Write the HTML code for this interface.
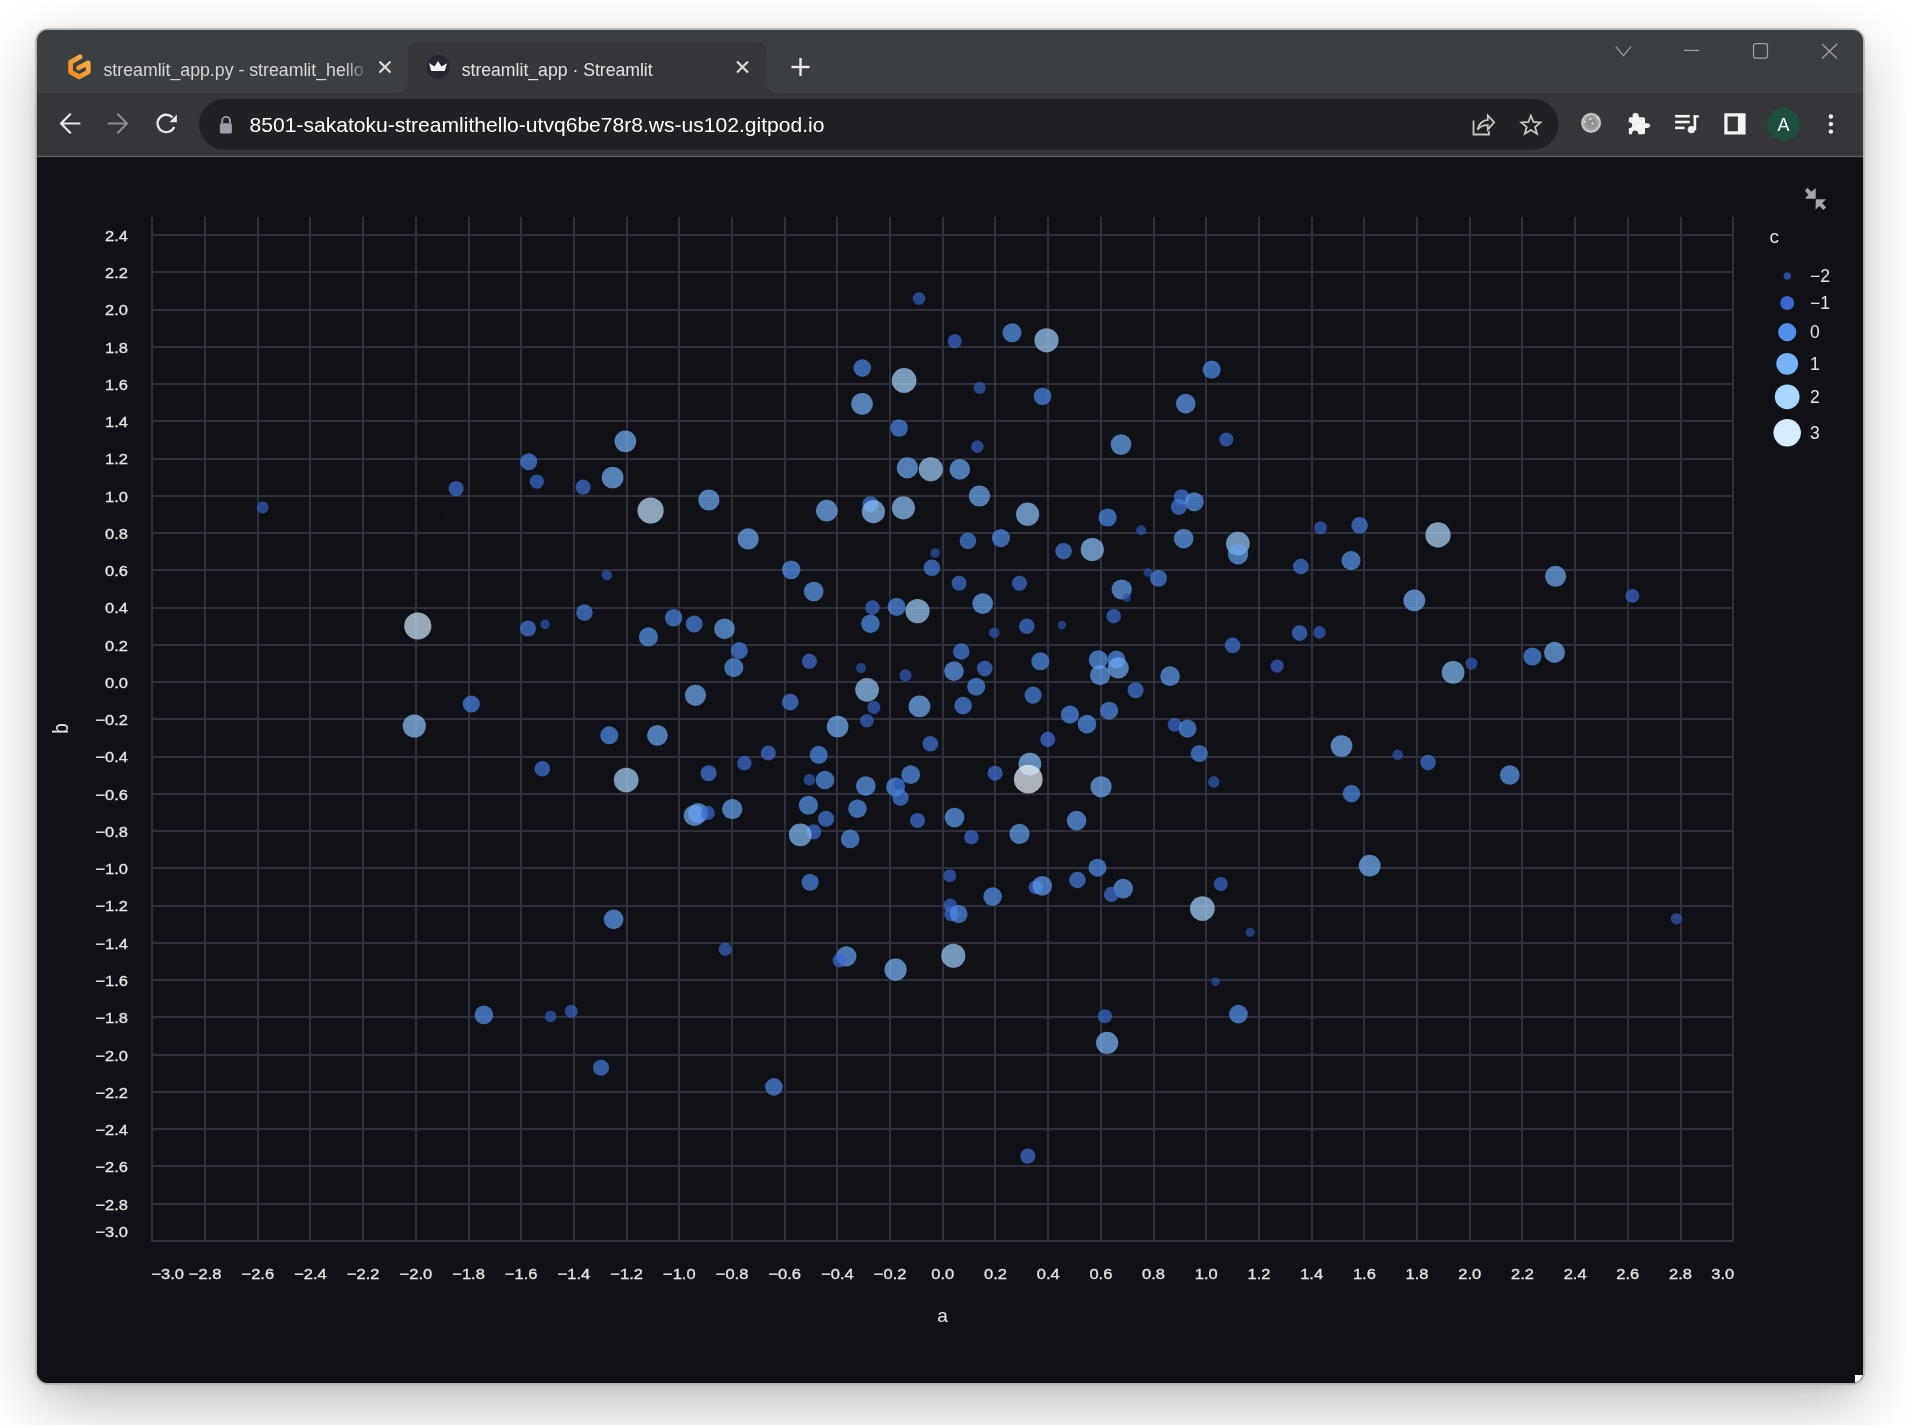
<!DOCTYPE html>
<html><head><meta charset="utf-8"><style>
html,body{margin:0;padding:0;width:1905px;height:1425px;overflow:hidden;background:#ffffff;}
#win{position:absolute;left:37px;top:30px;width:1826px;height:1353px;border-radius:11px;background:#0f1116;
 box-shadow: 0 22px 60px rgba(0,0,0,0.26), 0 2px 12px rgba(0,0,0,0.10);overflow:hidden;}
svg{position:absolute;left:0;top:0;will-change:transform;}
</style></head><body>
<div id="win"></div>
<svg width="1905" height="1425" viewBox="0 0 1905 1425">
<defs>
 <linearGradient id="gp" x1="0" y1="1" x2="1" y2="0"><stop offset="0" stop-color="#f08a17"/><stop offset="1" stop-color="#f7b44e"/></linearGradient>
 <linearGradient id="fadeg" gradientUnits="userSpaceOnUse" x1="345" y1="0" x2="366" y2="0"><stop offset="0" stop-color="#d5d6d8"/><stop offset="1" stop-color="#d5d6d8" stop-opacity="0.15"/></linearGradient>
 <radialGradient id="globe" cx="0.5" cy="0.5" r="0.5"><stop offset="0" stop-color="#8a8a8a"/><stop offset="0.65" stop-color="#9a9a9a"/><stop offset="0.88" stop-color="#cdcdcd"/><stop offset="1" stop-color="#a8a8a8"/></radialGradient>
 <clipPath id="wclip"><rect x="37" y="30" width="1826" height="1353" rx="11"/></clipPath>
</defs>
<rect x="36.1" y="29.1" width="1827.8" height="1354.8" rx="11.9" fill="none" stroke="#b3b3b3" stroke-width="1.8"/>
<g clip-path="url(#wclip)">
 <rect x="37" y="30" width="1826" height="63" fill="#3c3f42"/>
 <!-- active tab -->
 <path d="M396 93 Q408 93 408 81 L408 54 Q408 42 420 42 L755 42 Q767 42 767 54 L767 81 Q767 93 779 93 Z" fill="#35363a"/>
 <rect x="37" y="93" width="1826" height="63" fill="#35363a"/>
 <rect x="37" y="155.8" width="1826" height="1.6" fill="#5c5e62"/>
 <rect x="37" y="157.4" width="1826" height="1226" fill="#0f1116"/>
</g>
<!-- tab 1 -->
<path d="M80.1 56.9 L70.6 62.2 L70.6 72.2 L79.2 76.9 L88.2 72 L88.2 62.8 L78.6 67.9" fill="none" stroke="url(#gp)" stroke-width="4.8" stroke-linecap="round" stroke-linejoin="round"/>
<text x="103.5" y="75.5" fill="url(#fadeg)" font-size="18.5" font-family='"Liberation Sans", sans-serif' textLength="260" lengthAdjust="spacingAndGlyphs">streamlit_app.py - streamlit_hello</text>
<rect x="340" y="50" width="30" height="36" fill="#3c3f42" opacity="0.0"/>
<g stroke="#dcdcdc" stroke-width="2.2" stroke-linecap="butt"><line x1="379.5" y1="61.5" x2="390.5" y2="72.5"/><line x1="390.5" y1="61.5" x2="379.5" y2="72.5"/></g>
<!-- tab 2 -->
<circle cx="438.2" cy="66.8" r="11.8" fill="#262730"/>
<path d="M429 63 L434.5 66.5 L438 61 L441.5 66.5 L447 63.2 L444.8 71 L431.2 71 Z" fill="#f4f4f4"/>
<text x="461.7" y="75.5" fill="#e1e2e4" font-size="18.5" font-family='"Liberation Sans", sans-serif' textLength="191" lengthAdjust="spacingAndGlyphs">streamlit_app · Streamlit</text>
<g stroke="#dcdcdc" stroke-width="2.2"><line x1="737" y1="61.5" x2="748" y2="72.5"/><line x1="748" y1="61.5" x2="737" y2="72.5"/></g>
<!-- new tab plus -->
<g stroke="#e8eaed" stroke-width="2.4"><line x1="800.5" y1="58" x2="800.5" y2="76"/><line x1="791.5" y1="67" x2="809.5" y2="67"/></g>
<!-- window controls -->
<g stroke="#a0a1a3" stroke-width="1.2" fill="none">
 <path d="M1615.8 46.6 L1623.4 55.6 L1631 46.6"/>
 <line x1="1684" y1="50.4" x2="1699" y2="50.4"/>
 <rect x="1753.5" y="43.6" width="14" height="14.6" rx="2.2"/>
 <line x1="1822" y1="44" x2="1837" y2="58.5"/><line x1="1837" y1="44" x2="1822" y2="58.5"/>
</g>
<!-- nav -->
<g stroke="#e8eaed" stroke-width="2.2" fill="none" stroke-linecap="round" stroke-linejoin="round">
 <path d="M79.5 123.5 L61 123.5 M70.2 114.3 L61 123.5 L70.2 132.7"/>
</g>
<g stroke="#8b8c8f" stroke-width="2.2" fill="none" stroke-linecap="round" stroke-linejoin="round">
 <path d="M108.6 123.5 L127 123.5 M117.9 114.3 L127 123.5 L117.9 132.7"/>
</g>
<g fill="none" stroke="#e8eaed" stroke-width="2.3">
 <path d="M174.2 127 A8.7 8.7 0 1 1 172.5 117.4"/>
</g>
<path d="M169.5 122.3 L176.8 122.3 L176.8 114.6 Z" fill="#e8eaed"/>
<!-- omnibox -->
<rect x="199" y="99" width="1359.5" height="50.6" rx="25.3" fill="#202124"/>
<path d="M222.2 123 L222.2 120.8 A3.9 3.9 0 0 1 230 120.8 L230 123" fill="none" stroke="#9aa0a6" stroke-width="1.9"/>
<rect x="219.9" y="123.2" width="12" height="10.2" rx="1.3" fill="#9aa0a6"/>
<text x="249.5" y="131.5" fill="#ffffff" font-size="20.6" font-family='"Liberation Sans", sans-serif' textLength="575" lengthAdjust="spacingAndGlyphs">8501-sakatoku-streamlithello-utvq6be78r8.ws-us102.gitpod.io</text>
<!-- share -->
<g fill="none" stroke="#c7c7c7" stroke-width="1.8">
 <path d="M1473.5 120.5 L1473.5 134.5 L1489 134.5 L1489 131"/>
 <path d="M1477.6 129.6 Q1479.5 120.6 1487.8 119.8 L1487.8 115.5 L1494.2 122.3 L1487.8 129.6 L1487.8 125.2 Q1481.2 125.0 1477.6 129.6 Z"/>
</g>
<path transform="translate(1530.9,125.5) scale(0.95) translate(-1530.9,-125.5)" d="M1530.9 115.2 L1533.5 121.8 L1541 122.4 L1535.3 127.1 L1537.3 134.2 L1530.9 130.2 L1524.5 134.2 L1526.5 127.1 L1520.8 122.4 L1528.3 121.8 Z" fill="none" stroke="#c7c7c7" stroke-width="1.9" stroke-linejoin="miter"/>
<!-- extensions -->
<circle cx="1591.1" cy="122.8" r="10.1" fill="url(#globe)"/>
<g fill="#e8e8e8"><circle cx="1590.4" cy="119" r="1.1"/><circle cx="1584.5" cy="121.8" r="1.1"/><circle cx="1592.6" cy="123.4" r="1.1"/><circle cx="1597.8" cy="117.7" r="1"/></g>
<path d="M1635.5 113 Q1638.5 112.6 1638.8 116 L1638.8 117.3 L1643.4 117.3 Q1645 117.3 1645 119 L1645 123 Q1650.2 123 1650.2 125.4 Q1650.2 128 1645 128 L1645 132.8 Q1645 134.2 1643.5 134.2 L1638.2 134.2 Q1638.2 130.6 1635 130.6 Q1632 130.6 1632 134.2 L1630 134.2 Q1628.8 134.2 1628.8 133 L1628.8 128.2 Q1632.2 128.2 1632.2 125.2 Q1632.2 122.2 1628.8 122.2 L1628.8 118.8 Q1628.8 117.3 1630.4 117.3 L1632.5 117.3 L1632.5 116 Q1632.6 112.8 1635.5 113 Z" fill="#f1f3f4"/>
<g fill="#f1f3f4">
 <rect x="1675.1" y="114.9" width="14.7" height="2.6"/>
 <rect x="1675.1" y="120.7" width="14.7" height="2.6"/>
 <rect x="1675.1" y="126.6" width="9.5" height="2.6"/>
 <rect x="1693.6" y="115.2" width="2.6" height="15"/>
 <rect x="1693.6" y="115.2" width="5.3" height="2.3"/>
 <circle cx="1691.4" cy="129.6" r="3.7"/>
</g>
<path d="M1724.3 113.2 H1745.6 V134.5 H1724.3 Z M1727.6 116.5 V131.2 H1737.9 V116.5 Z" fill="#f1f3f4" fill-rule="evenodd"/>
<circle cx="1783.5" cy="124.3" r="16.4" fill="#1d4f41"/>
<text x="1783.6" y="131.3" text-anchor="middle" fill="#ffffff" font-size="18" font-family='"Liberation Sans", sans-serif'>A</text>
<g fill="#f1f3f4"><circle cx="1830.9" cy="116.5" r="2.2"/><circle cx="1830.9" cy="124.1" r="2.2"/><circle cx="1830.9" cy="131.6" r="2.2"/></g>
<!-- chart -->
<g fill="#2e2f3a" shape-rendering="crispEdges"><rect x="151" y="217" width="2" height="1025" /><rect x="204" y="217" width="2" height="1025" /><rect x="257" y="217" width="2" height="1025" /><rect x="309" y="217" width="2" height="1025" /><rect x="362" y="217" width="2" height="1025" /><rect x="415" y="217" width="2" height="1025" /><rect x="468" y="217" width="2" height="1025" /><rect x="520" y="217" width="2" height="1025" /><rect x="573" y="217" width="2" height="1025" /><rect x="626" y="217" width="2" height="1025" /><rect x="678" y="217" width="2" height="1025" /><rect x="731" y="217" width="2" height="1025" /><rect x="784" y="217" width="2" height="1025" /><rect x="836" y="217" width="2" height="1025" /><rect x="889" y="217" width="2" height="1025" /><rect x="942" y="217" width="2" height="1025" /><rect x="994" y="217" width="2" height="1025" /><rect x="1047" y="217" width="2" height="1025" /><rect x="1100" y="217" width="2" height="1025" /><rect x="1153" y="217" width="2" height="1025" /><rect x="1205" y="217" width="2" height="1025" /><rect x="1258" y="217" width="2" height="1025" /><rect x="1311" y="217" width="2" height="1025" /><rect x="1363" y="217" width="2" height="1025" /><rect x="1416" y="217" width="2" height="1025" /><rect x="1469" y="217" width="2" height="1025" /><rect x="1521" y="217" width="2" height="1025" /><rect x="1574" y="217" width="2" height="1025" /><rect x="1627" y="217" width="2" height="1025" /><rect x="1680" y="217" width="2" height="1025" /><rect x="1732" y="217" width="2" height="1025" /><rect x="151" y="1240" width="1583" height="2" /><rect x="151" y="1203" width="1583" height="2" /><rect x="151" y="1165" width="1583" height="2" /><rect x="151" y="1128" width="1583" height="2" /><rect x="151" y="1091" width="1583" height="2" /><rect x="151" y="1054" width="1583" height="2" /><rect x="151" y="1016" width="1583" height="2" /><rect x="151" y="979" width="1583" height="2" /><rect x="151" y="942" width="1583" height="2" /><rect x="151" y="905" width="1583" height="2" /><rect x="151" y="867" width="1583" height="2" /><rect x="151" y="830" width="1583" height="2" /><rect x="151" y="793" width="1583" height="2" /><rect x="151" y="756" width="1583" height="2" /><rect x="151" y="718" width="1583" height="2" /><rect x="151" y="681" width="1583" height="2" /><rect x="151" y="644" width="1583" height="2" /><rect x="151" y="607" width="1583" height="2" /><rect x="151" y="569" width="1583" height="2" /><rect x="151" y="532" width="1583" height="2" /><rect x="151" y="495" width="1583" height="2" /><rect x="151" y="458" width="1583" height="2" /><rect x="151" y="420" width="1583" height="2" /><rect x="151" y="383" width="1583" height="2" /><rect x="151" y="346" width="1583" height="2" /><rect x="151" y="309" width="1583" height="2" /><rect x="151" y="271" width="1583" height="2" /><rect x="151" y="234" width="1583" height="2" /></g>
<g fill="#e6e6e6" stroke="#e6e6e6" stroke-width="0.3" font-family='"Liberation Sans", sans-serif' font-size="15"><text transform="translate(128,1237.00) scale(1.1,1)" text-anchor="end">−3.0</text><text transform="translate(128,1209.54) scale(1.1,1)" text-anchor="end">−2.8</text><text transform="translate(128,1172.28) scale(1.1,1)" text-anchor="end">−2.6</text><text transform="translate(128,1135.02) scale(1.1,1)" text-anchor="end">−2.4</text><text transform="translate(128,1097.76) scale(1.1,1)" text-anchor="end">−2.2</text><text transform="translate(128,1060.50) scale(1.1,1)" text-anchor="end">−2.0</text><text transform="translate(128,1023.24) scale(1.1,1)" text-anchor="end">−1.8</text><text transform="translate(128,985.98) scale(1.1,1)" text-anchor="end">−1.6</text><text transform="translate(128,948.72) scale(1.1,1)" text-anchor="end">−1.4</text><text transform="translate(128,911.46) scale(1.1,1)" text-anchor="end">−1.2</text><text transform="translate(128,874.20) scale(1.1,1)" text-anchor="end">−1.0</text><text transform="translate(128,836.94) scale(1.1,1)" text-anchor="end">−0.8</text><text transform="translate(128,799.68) scale(1.1,1)" text-anchor="end">−0.6</text><text transform="translate(128,762.42) scale(1.1,1)" text-anchor="end">−0.4</text><text transform="translate(128,725.16) scale(1.1,1)" text-anchor="end">−0.2</text><text transform="translate(128,687.90) scale(1.1,1)" text-anchor="end">0.0</text><text transform="translate(128,650.64) scale(1.1,1)" text-anchor="end">0.2</text><text transform="translate(128,613.38) scale(1.1,1)" text-anchor="end">0.4</text><text transform="translate(128,576.12) scale(1.1,1)" text-anchor="end">0.6</text><text transform="translate(128,538.86) scale(1.1,1)" text-anchor="end">0.8</text><text transform="translate(128,501.60) scale(1.1,1)" text-anchor="end">1.0</text><text transform="translate(128,464.34) scale(1.1,1)" text-anchor="end">1.2</text><text transform="translate(128,427.08) scale(1.1,1)" text-anchor="end">1.4</text><text transform="translate(128,389.82) scale(1.1,1)" text-anchor="end">1.6</text><text transform="translate(128,352.56) scale(1.1,1)" text-anchor="end">1.8</text><text transform="translate(128,315.30) scale(1.1,1)" text-anchor="end">2.0</text><text transform="translate(128,278.04) scale(1.1,1)" text-anchor="end">2.2</text><text transform="translate(128,240.78) scale(1.1,1)" text-anchor="end">2.4</text><text transform="translate(151.40,1278.5) scale(1.1,1)" text-anchor="start">−3.0</text><text transform="translate(205.09,1278.5) scale(1.1,1)" text-anchor="middle">−2.8</text><text transform="translate(257.79,1278.5) scale(1.1,1)" text-anchor="middle">−2.6</text><text transform="translate(310.48,1278.5) scale(1.1,1)" text-anchor="middle">−2.4</text><text transform="translate(363.17,1278.5) scale(1.1,1)" text-anchor="middle">−2.2</text><text transform="translate(415.87,1278.5) scale(1.1,1)" text-anchor="middle">−2.0</text><text transform="translate(468.56,1278.5) scale(1.1,1)" text-anchor="middle">−1.8</text><text transform="translate(521.25,1278.5) scale(1.1,1)" text-anchor="middle">−1.6</text><text transform="translate(573.95,1278.5) scale(1.1,1)" text-anchor="middle">−1.4</text><text transform="translate(626.64,1278.5) scale(1.1,1)" text-anchor="middle">−1.2</text><text transform="translate(679.33,1278.5) scale(1.1,1)" text-anchor="middle">−1.0</text><text transform="translate(732.03,1278.5) scale(1.1,1)" text-anchor="middle">−0.8</text><text transform="translate(784.72,1278.5) scale(1.1,1)" text-anchor="middle">−0.6</text><text transform="translate(837.41,1278.5) scale(1.1,1)" text-anchor="middle">−0.4</text><text transform="translate(890.11,1278.5) scale(1.1,1)" text-anchor="middle">−0.2</text><text transform="translate(942.80,1278.5) scale(1.1,1)" text-anchor="middle">0.0</text><text transform="translate(995.49,1278.5) scale(1.1,1)" text-anchor="middle">0.2</text><text transform="translate(1048.19,1278.5) scale(1.1,1)" text-anchor="middle">0.4</text><text transform="translate(1100.88,1278.5) scale(1.1,1)" text-anchor="middle">0.6</text><text transform="translate(1153.57,1278.5) scale(1.1,1)" text-anchor="middle">0.8</text><text transform="translate(1206.27,1278.5) scale(1.1,1)" text-anchor="middle">1.0</text><text transform="translate(1258.96,1278.5) scale(1.1,1)" text-anchor="middle">1.2</text><text transform="translate(1311.65,1278.5) scale(1.1,1)" text-anchor="middle">1.4</text><text transform="translate(1364.35,1278.5) scale(1.1,1)" text-anchor="middle">1.6</text><text transform="translate(1417.04,1278.5) scale(1.1,1)" text-anchor="middle">1.8</text><text transform="translate(1469.73,1278.5) scale(1.1,1)" text-anchor="middle">2.0</text><text transform="translate(1522.43,1278.5) scale(1.1,1)" text-anchor="middle">2.2</text><text transform="translate(1575.12,1278.5) scale(1.1,1)" text-anchor="middle">2.4</text><text transform="translate(1627.81,1278.5) scale(1.1,1)" text-anchor="middle">2.6</text><text transform="translate(1680.51,1278.5) scale(1.1,1)" text-anchor="middle">2.8</text><text transform="translate(1734.20,1278.5) scale(1.1,1)" text-anchor="end">3.0</text></g>
<text x="942.5" y="1322" text-anchor="middle" fill="#e6e6e6" font-size="19" font-family='"Liberation Sans", sans-serif'>a</text><text transform="translate(68.3,728.5) rotate(-90) scale(1,1.18)" text-anchor="middle" fill="#e6e6e6" font-size="19" font-family='"Liberation Sans", sans-serif'>b</text>
<g fill-opacity="0.7"><circle cx="262.6" cy="507.5" r="5.90" fill="#335cbb"/><circle cx="456.1" cy="488.6" r="7.55" fill="#4071d6"/><circle cx="447.8" cy="517.6" r="0.75" fill="#20438a"/><circle cx="528.7" cy="461.7" r="8.55" fill="#4a84e4"/><circle cx="536.8" cy="481.6" r="7.20" fill="#3c6ad2"/><circle cx="583.1" cy="487.1" r="7.55" fill="#4071d6"/><circle cx="612.6" cy="477.5" r="10.85" fill="#76b2fb"/><circle cx="606.8" cy="575.0" r="5.30" fill="#2f57b2"/><circle cx="584.4" cy="612.6" r="8.30" fill="#477fe0"/><circle cx="528.0" cy="628.5" r="8.05" fill="#447add"/><circle cx="545.1" cy="624.4" r="4.80" fill="#2c53aa"/><circle cx="417.8" cy="626.0" r="13.60" fill="#d2eaff"/><circle cx="471.3" cy="704.0" r="8.55" fill="#4a84e4"/><circle cx="414.3" cy="726.0" r="11.60" fill="#8ec4fd"/><circle cx="609.3" cy="735.3" r="9.05" fill="#4f8eeb"/><circle cx="542.3" cy="768.7" r="7.80" fill="#4275d9"/><circle cx="613.6" cy="919.4" r="9.85" fill="#5f9ef2"/><circle cx="483.9" cy="1014.9" r="9.30" fill="#5493ed"/><circle cx="550.6" cy="1016.4" r="5.80" fill="#325bba"/><circle cx="571.3" cy="1011.4" r="6.55" fill="#3762c7"/><circle cx="601.0" cy="1067.8" r="8.05" fill="#447add"/><circle cx="919.0" cy="298.5" r="6.30" fill="#3560c3"/><circle cx="954.8" cy="341.1" r="7.05" fill="#3b68d0"/><circle cx="1012.0" cy="332.7" r="9.55" fill="#5998ef"/><circle cx="1046.5" cy="340.3" r="12.10" fill="#9fd0fe"/><circle cx="862.3" cy="368.0" r="8.80" fill="#4c89e7"/><circle cx="904.1" cy="380.4" r="12.35" fill="#a8d6ff"/><circle cx="979.7" cy="387.9" r="6.05" fill="#345dbe"/><circle cx="1042.5" cy="396.2" r="8.80" fill="#4c89e7"/><circle cx="862.0" cy="403.8" r="10.85" fill="#76b2fb"/><circle cx="899.1" cy="428.0" r="8.80" fill="#4c89e7"/><circle cx="977.4" cy="446.6" r="6.30" fill="#3560c3"/><circle cx="625.4" cy="441.3" r="10.85" fill="#76b2fb"/><circle cx="650.6" cy="510.6" r="13.10" fill="#c1e2ff"/><circle cx="708.9" cy="500.0" r="10.60" fill="#70adf8"/><circle cx="748.2" cy="538.9" r="10.60" fill="#70adf8"/><circle cx="791.2" cy="569.8" r="9.30" fill="#5493ed"/><circle cx="826.8" cy="510.6" r="10.85" fill="#76b2fb"/><circle cx="870.4" cy="504.3" r="8.05" fill="#447add"/><circle cx="873.4" cy="511.6" r="11.60" fill="#8ec4fd"/><circle cx="907.4" cy="467.8" r="10.60" fill="#70adf8"/><circle cx="930.8" cy="469.3" r="12.10" fill="#9fd0fe"/><circle cx="959.8" cy="469.3" r="10.35" fill="#6ba8f6"/><circle cx="979.5" cy="496.0" r="10.60" fill="#70adf8"/><circle cx="903.4" cy="507.9" r="11.60" fill="#8ec4fd"/><circle cx="1027.6" cy="514.2" r="11.60" fill="#8ec4fd"/><circle cx="967.9" cy="540.9" r="8.30" fill="#477fe0"/><circle cx="1000.9" cy="538.1" r="9.05" fill="#4f8eeb"/><circle cx="935.1" cy="553.0" r="4.80" fill="#2c53aa"/><circle cx="931.8" cy="567.8" r="8.30" fill="#477fe0"/><circle cx="1063.6" cy="551.2" r="8.30" fill="#477fe0"/><circle cx="813.7" cy="591.5" r="9.85" fill="#5f9ef2"/><circle cx="959.1" cy="583.2" r="7.55" fill="#4071d6"/><circle cx="1019.5" cy="583.2" r="7.55" fill="#4071d6"/><circle cx="872.4" cy="607.6" r="7.30" fill="#3d6cd3"/><circle cx="896.6" cy="606.9" r="9.05" fill="#4f8eeb"/><circle cx="917.5" cy="611.1" r="12.10" fill="#9fd0fe"/><circle cx="982.7" cy="603.6" r="10.35" fill="#6ba8f6"/><circle cx="870.4" cy="623.7" r="9.30" fill="#5493ed"/><circle cx="994.3" cy="632.8" r="5.30" fill="#2f57b2"/><circle cx="1026.8" cy="626.3" r="7.80" fill="#4275d9"/><circle cx="1061.9" cy="625.0" r="4.30" fill="#2a50a4"/><circle cx="673.6" cy="617.7" r="8.80" fill="#4c89e7"/><circle cx="694.2" cy="624.0" r="8.55" fill="#4a84e4"/><circle cx="724.5" cy="628.8" r="10.35" fill="#6ba8f6"/><circle cx="648.4" cy="636.9" r="9.55" fill="#5998ef"/><circle cx="739.3" cy="650.5" r="8.55" fill="#4a84e4"/><circle cx="733.8" cy="667.6" r="9.55" fill="#5998ef"/><circle cx="809.4" cy="661.3" r="7.55" fill="#4071d6"/><circle cx="861.0" cy="668.1" r="5.05" fill="#2e55ae"/><circle cx="905.6" cy="675.4" r="6.05" fill="#345dbe"/><circle cx="961.3" cy="651.5" r="8.30" fill="#477fe0"/><circle cx="954.0" cy="671.1" r="9.85" fill="#5f9ef2"/><circle cx="984.8" cy="668.6" r="7.80" fill="#4275d9"/><circle cx="1040.4" cy="661.3" r="9.05" fill="#4f8eeb"/><circle cx="867.1" cy="689.8" r="11.85" fill="#97cafe"/><circle cx="976.2" cy="686.7" r="9.05" fill="#4f8eeb"/><circle cx="1033.1" cy="695.1" r="8.55" fill="#4a84e4"/><circle cx="695.5" cy="695.3" r="10.60" fill="#70adf8"/><circle cx="790.2" cy="702.1" r="8.30" fill="#477fe0"/><circle cx="873.9" cy="707.4" r="6.55" fill="#3762c7"/><circle cx="919.5" cy="706.4" r="10.85" fill="#76b2fb"/><circle cx="963.1" cy="705.6" r="8.80" fill="#4c89e7"/><circle cx="1069.9" cy="714.5" r="9.05" fill="#4f8eeb"/><circle cx="866.8" cy="720.8" r="6.80" fill="#3965cc"/><circle cx="837.6" cy="726.5" r="10.85" fill="#76b2fb"/><circle cx="657.4" cy="735.4" r="10.35" fill="#6ba8f6"/><circle cx="930.3" cy="743.7" r="7.80" fill="#4275d9"/><circle cx="1047.7" cy="739.4" r="7.55" fill="#4071d6"/><circle cx="768.3" cy="753.0" r="7.55" fill="#4071d6"/><circle cx="744.4" cy="763.1" r="7.30" fill="#3d6cd3"/><circle cx="818.7" cy="754.8" r="9.05" fill="#4f8eeb"/><circle cx="626.2" cy="780.0" r="12.35" fill="#a8d6ff"/><circle cx="708.6" cy="773.2" r="8.05" fill="#447add"/><circle cx="809.4" cy="779.7" r="5.80" fill="#325bba"/><circle cx="825.0" cy="780.0" r="9.30" fill="#5493ed"/><circle cx="865.8" cy="786.0" r="9.85" fill="#5f9ef2"/><circle cx="895.5" cy="787.0" r="9.45" fill="#5796ef"/><circle cx="899.5" cy="784.0" r="5.50" fill="#3059b5"/><circle cx="900.5" cy="797.7" r="8.20" fill="#467ddf"/><circle cx="910.7" cy="774.7" r="9.35" fill="#5594ee"/><circle cx="995.1" cy="773.2" r="7.55" fill="#4071d6"/><circle cx="1029.9" cy="764.1" r="11.35" fill="#86befc"/><circle cx="1028.3" cy="779.2" r="14.35" fill="#edf7ff"/><circle cx="694.4" cy="815.5" r="10.60" fill="#70adf8"/><circle cx="698.2" cy="813.1" r="10.20" fill="#67a5f5"/><circle cx="707.8" cy="812.9" r="7.05" fill="#3b68d0"/><circle cx="732.2" cy="809.1" r="10.20" fill="#67a5f5"/><circle cx="808.4" cy="805.2" r="9.55" fill="#5998ef"/><circle cx="826.0" cy="818.8" r="8.05" fill="#447add"/><circle cx="813.7" cy="831.9" r="7.55" fill="#4071d6"/><circle cx="800.3" cy="834.9" r="11.35" fill="#86befc"/><circle cx="857.5" cy="808.7" r="9.30" fill="#5493ed"/><circle cx="850.2" cy="838.9" r="9.30" fill="#5493ed"/><circle cx="917.5" cy="820.5" r="7.55" fill="#4071d6"/><circle cx="954.5" cy="817.5" r="9.85" fill="#5f9ef2"/><circle cx="971.4" cy="837.2" r="7.30" fill="#3d6cd3"/><circle cx="1019.5" cy="833.9" r="10.10" fill="#65a3f4"/><circle cx="810.1" cy="882.3" r="8.55" fill="#4a84e4"/><circle cx="725.2" cy="949.3" r="6.55" fill="#3762c7"/><circle cx="846.4" cy="956.3" r="10.10" fill="#65a3f4"/><circle cx="839.6" cy="960.4" r="7.05" fill="#3b68d0"/><circle cx="895.6" cy="969.7" r="11.10" fill="#7eb8fc"/><circle cx="953.3" cy="955.8" r="12.10" fill="#9fd0fe"/><circle cx="949.7" cy="875.7" r="6.55" fill="#3762c7"/><circle cx="950.2" cy="905.4" r="6.80" fill="#3965cc"/><circle cx="951.5" cy="914.0" r="7.30" fill="#3d6cd3"/><circle cx="958.6" cy="914.0" r="9.05" fill="#4f8eeb"/><circle cx="992.6" cy="896.6" r="9.30" fill="#5493ed"/><circle cx="1035.7" cy="887.3" r="7.05" fill="#3b68d0"/><circle cx="1042.2" cy="885.8" r="9.85" fill="#5f9ef2"/><circle cx="773.9" cy="1086.9" r="8.80" fill="#4c89e7"/><circle cx="1027.8" cy="1156.1" r="7.55" fill="#4071d6"/><circle cx="1211.7" cy="369.6" r="9.05" fill="#4f8eeb"/><circle cx="1185.7" cy="403.6" r="9.85" fill="#5f9ef2"/><circle cx="1226.3" cy="439.6" r="7.05" fill="#3b68d0"/><circle cx="1121.0" cy="444.6" r="10.35" fill="#6ba8f6"/><circle cx="1181.7" cy="497.1" r="7.80" fill="#4275d9"/><circle cx="1178.9" cy="506.9" r="8.05" fill="#447add"/><circle cx="1194.3" cy="501.8" r="9.55" fill="#5998ef"/><circle cx="1107.6" cy="517.5" r="9.05" fill="#4f8eeb"/><circle cx="1141.1" cy="530.3" r="5.05" fill="#2e55ae"/><circle cx="1183.7" cy="538.6" r="9.85" fill="#5f9ef2"/><circle cx="1092.3" cy="549.5" r="11.60" fill="#8ec4fd"/><circle cx="1237.9" cy="543.7" r="11.85" fill="#97cafe"/><circle cx="1238.1" cy="554.3" r="10.10" fill="#65a3f4"/><circle cx="1320.5" cy="527.8" r="6.55" fill="#3762c7"/><circle cx="1359.6" cy="525.3" r="8.30" fill="#477fe0"/><circle cx="1438.0" cy="534.9" r="12.60" fill="#b0daff"/><circle cx="1300.9" cy="566.6" r="7.80" fill="#4275d9"/><circle cx="1351.0" cy="560.6" r="9.55" fill="#5998ef"/><circle cx="1147.7" cy="572.4" r="4.30" fill="#2a50a4"/><circle cx="1158.5" cy="578.2" r="8.55" fill="#4a84e4"/><circle cx="1121.7" cy="589.5" r="10.10" fill="#65a3f4"/><circle cx="1126.8" cy="597.8" r="4.30" fill="#2a50a4"/><circle cx="1414.3" cy="600.4" r="10.85" fill="#76b2fb"/><circle cx="1113.7" cy="616.2" r="7.30" fill="#3d6cd3"/><circle cx="1299.6" cy="633.1" r="7.80" fill="#4275d9"/><circle cx="1319.5" cy="632.4" r="6.30" fill="#3560c3"/><circle cx="1232.6" cy="645.4" r="7.80" fill="#4275d9"/><circle cx="1277.2" cy="666.1" r="6.55" fill="#3762c7"/><circle cx="1098.3" cy="659.8" r="9.55" fill="#5998ef"/><circle cx="1116.4" cy="659.6" r="9.05" fill="#4f8eeb"/><circle cx="1118.2" cy="667.9" r="10.60" fill="#70adf8"/><circle cx="1100.1" cy="675.2" r="10.10" fill="#65a3f4"/><circle cx="1170.1" cy="676.2" r="9.85" fill="#5f9ef2"/><circle cx="1135.6" cy="690.3" r="8.05" fill="#447add"/><circle cx="1087.0" cy="724.1" r="9.30" fill="#5493ed"/><circle cx="1109.1" cy="710.7" r="9.05" fill="#4f8eeb"/><circle cx="1174.6" cy="724.8" r="7.05" fill="#3b68d0"/><circle cx="1187.5" cy="728.6" r="9.05" fill="#4f8eeb"/><circle cx="1199.3" cy="753.5" r="8.55" fill="#4a84e4"/><circle cx="1213.7" cy="781.8" r="5.80" fill="#325bba"/><circle cx="1341.5" cy="746.0" r="10.85" fill="#76b2fb"/><circle cx="1397.6" cy="754.8" r="5.30" fill="#2f57b2"/><circle cx="1428.1" cy="762.6" r="7.80" fill="#4275d9"/><circle cx="1453.1" cy="672.4" r="11.35" fill="#86befc"/><circle cx="1471.5" cy="663.6" r="6.05" fill="#345dbe"/><circle cx="1532.4" cy="656.5" r="9.05" fill="#4f8eeb"/><circle cx="1509.8" cy="775.0" r="9.85" fill="#5f9ef2"/><circle cx="1101.1" cy="786.8" r="10.60" fill="#70adf8"/><circle cx="1076.6" cy="820.6" r="9.85" fill="#5f9ef2"/><circle cx="1351.5" cy="793.6" r="8.80" fill="#4c89e7"/><circle cx="1369.7" cy="865.7" r="10.85" fill="#76b2fb"/><circle cx="1097.5" cy="867.7" r="9.05" fill="#4f8eeb"/><circle cx="1077.4" cy="880.0" r="8.30" fill="#477fe0"/><circle cx="1123.2" cy="888.6" r="9.85" fill="#5f9ef2"/><circle cx="1111.4" cy="894.4" r="7.55" fill="#4071d6"/><circle cx="1220.8" cy="884.1" r="7.05" fill="#3b68d0"/><circle cx="1202.4" cy="908.5" r="12.35" fill="#a8d6ff"/><circle cx="1250.0" cy="932.4" r="4.55" fill="#2b52a7"/><circle cx="1215.5" cy="981.6" r="4.30" fill="#2a50a4"/><circle cx="1104.9" cy="1016.3" r="7.05" fill="#3b68d0"/><circle cx="1238.4" cy="1014.1" r="9.30" fill="#5493ed"/><circle cx="1107.1" cy="1042.8" r="11.10" fill="#7eb8fc"/><circle cx="1555.6" cy="576.2" r="10.55" fill="#6facf8"/><circle cx="1632.4" cy="595.9" r="6.95" fill="#3a66cf"/><circle cx="1554.5" cy="652.4" r="10.55" fill="#6facf8"/><circle cx="1676.4" cy="918.8" r="5.65" fill="#315ab7"/></g>
<circle cx="1787.2" cy="276.0" r="3.64" fill="#274c9c"/><text x="1810" y="282.0" fill="#e6e6e6" font-size="17.5" font-family='"Liberation Sans", sans-serif'>−2</text><circle cx="1787.2" cy="303.0" r="6.95" fill="#3a66cf"/><text x="1810" y="309.0" fill="#e6e6e6" font-size="17.5" font-family='"Liberation Sans", sans-serif'>−1</text><circle cx="1787.2" cy="332.1" r="9.12" fill="#5090ec"/><text x="1810" y="338.1" fill="#e6e6e6" font-size="17.5" font-family='"Liberation Sans", sans-serif'>0</text><circle cx="1787.2" cy="363.8" r="10.87" fill="#77b3fb"/><text x="1810" y="369.8" fill="#e6e6e6" font-size="17.5" font-family='"Liberation Sans", sans-serif'>1</text><circle cx="1787.2" cy="396.8" r="12.38" fill="#a9d7ff"/><text x="1810" y="402.8" fill="#e6e6e6" font-size="17.5" font-family='"Liberation Sans", sans-serif'>2</text><circle cx="1787.2" cy="432.8" r="13.72" fill="#d6ecff"/><text x="1810" y="438.8" fill="#e6e6e6" font-size="17.5" font-family='"Liberation Sans", sans-serif'>3</text><text x="1769.5" y="243.3" fill="#e6e6e6" font-size="19" font-family='"Liberation Sans", sans-serif'>c</text>
<g fill="#a3a4a6"><path d="M1807.4 187.8 L1811.45 191.87 L1815.72 187.94 L1815.72 198.72 L1805.05 198.72 L1808.31 194.68 L1805.05 190.64 Z"/><path d="M1815.94 199.17 L1826.05 199.17 L1822.23 203.32 L1826.05 207.37 L1823.47 209.95 L1819.43 205.91 L1815.49 209.72 Z"/></g>
<!-- bottom-right artifact -->
<rect x="1855" y="1375" width="8" height="8" fill="#ffffff" clip-path="url(#wclip)"/>
</svg>
</body></html>
